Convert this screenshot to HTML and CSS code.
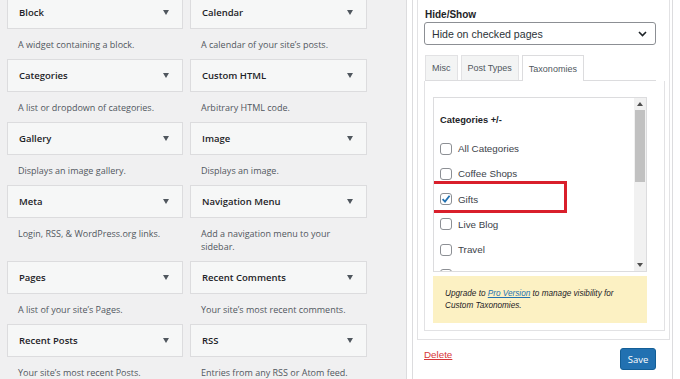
FILE: index.html
```html
<!DOCTYPE html>
<html>
<head>
<meta charset="utf-8">
<link rel="stylesheet" href="styles.css">
</head>
<body>
<div class="page">
  <div class="widgets">
    <div class="witem"><div class="wbox"><span class="wtitle">Block</span><span class="arrow"></span></div><p class="wdesc">A widget containing a block.</p></div>
    <div class="witem"><div class="wbox"><span class="wtitle">Calendar</span><span class="arrow"></span></div><p class="wdesc">A calendar of your site’s posts.</p></div>
    <div class="witem"><div class="wbox"><span class="wtitle">Categories</span><span class="arrow"></span></div><p class="wdesc">A list or dropdown of categories.</p></div>
    <div class="witem"><div class="wbox"><span class="wtitle">Custom HTML</span><span class="arrow"></span></div><p class="wdesc">Arbitrary HTML code.</p></div>
    <div class="witem"><div class="wbox"><span class="wtitle">Gallery</span><span class="arrow"></span></div><p class="wdesc">Displays an image gallery.</p></div>
    <div class="witem"><div class="wbox"><span class="wtitle">Image</span><span class="arrow"></span></div><p class="wdesc">Displays an image.</p></div>
    <div class="witem"><div class="wbox"><span class="wtitle">Meta</span><span class="arrow"></span></div><p class="wdesc">Login, RSS, &amp; WordPress.org links.</p></div>
    <div class="witem"><div class="wbox"><span class="wtitle">Navigation Menu</span><span class="arrow"></span></div><p class="wdesc">Add a navigation menu to your sidebar.</p></div>
    <div class="witem"><div class="wbox"><span class="wtitle">Pages</span><span class="arrow"></span></div><p class="wdesc">A list of your site’s Pages.</p></div>
    <div class="witem"><div class="wbox"><span class="wtitle">Recent Comments</span><span class="arrow"></span></div><p class="wdesc">Your site’s most recent comments.</p></div>
    <div class="witem"><div class="wbox"><span class="wtitle">Recent Posts</span><span class="arrow"></span></div><p class="wdesc">Your site’s most recent Posts.</p></div>
    <div class="witem"><div class="wbox"><span class="wtitle">RSS</span><span class="arrow"></span></div><p class="wdesc">Entries from any RSS or Atom feed.</p></div>
  </div>

  <div class="sidebar">
    <div class="widget">
      <div class="form-box">
        <div class="hs-label">Hide/Show</div>
        <div class="select">
          <span>Hide on checked pages</span>
          <svg class="chev" width="9" height="6" viewBox="0 0 9 6"><path d="M1 1 L4.5 4.5 L8 1" fill="none" stroke="#1d2327" stroke-width="1.6"/></svg>
        </div>
        <div class="tabs">
          <span class="tab">Misc</span>
          <span class="tab">Post Types</span>
          <span class="tab active">Taxonomies</span>
        </div>
        <div class="panel">
          <div class="listbox">
            <div class="list">
              <div class="list-title">Categories +/-</div>
              <div class="item"><span class="cb"></span>All Categories</div>
              <div class="item"><span class="cb"></span>Coffee Shops</div>
              <div class="item hl"><span class="cb"><svg width="10" height="10" viewBox="0 0 10 10"><path d="M1.6 5.2 L4 7.6 L8.6 1.8" fill="none" stroke="#2271b1" stroke-width="1.8"/></svg></span>Gifts<span class="mark"></span></div>
              <div class="item"><span class="cb"></span>Live Blog</div>
              <div class="item"><span class="cb"></span>Travel</div>
              <div class="item"><span class="cb"></span></div>
            </div>
            <div class="scrollbar">
              <div class="sb-btn"><svg width="6" height="4" viewBox="0 0 6 4"><path d="M0 4 L3 0 L6 4Z" fill="#505050"/></svg></div>
              <div class="sb-thumb"></div>
              <div class="sb-track"></div>
              <div class="sb-btn"><svg width="6" height="4" viewBox="0 0 6 4"><path d="M0 0 L3 4 L6 0Z" fill="#505050"/></svg></div>
            </div>
          </div>
          <div class="notice">Upgrade to <a href="#">Pro Version</a> to manage visibility for Custom Taxonomies.</div>
        </div>
      </div>
      <div class="actions">
        <a class="delete" href="#">Delete</a>
        <button class="save">Save</button>
      </div>
    </div>
  </div>
</div>
</body>
</html>
```

FILE: styles.css
```css
html, body {
  margin: 0;
  padding: 0;
}
body {
  background: #f0f0f1;
  width: 680px;
  height: 379px;
  overflow: hidden;
  font-family: "Open Sans", "Noto Sans", sans-serif;
}
.page {
  display: flex;
  height: 379px;
}
.widgets {
  width: 406px;
  flex: none;
  box-sizing: border-box;
  padding-left: 7px;
  margin-top: -4px;
  display: grid;
  grid-template-columns: 176px 177px;
  column-gap: 7px;
  align-content: start;
}
.wbox {
  height: 33px;
  box-sizing: border-box;
  border: 1px solid #dcdcde;
  background: #f6f7f7;
  display: flex;
  align-items: center;
  justify-content: space-between;
  padding: 0 13px 0 11px;
}
.wtitle {
  font-size: 9.5px;
  font-weight: 600;
  color: #1d2327;
}
.arrow {
  width: 0;
  height: 0;
  border-left: 3.5px solid transparent;
  border-right: 3.5px solid transparent;
  border-top: 5px solid #50575e;
}
.wdesc {
  margin: 9px 0 8px 11px;
  max-width: 150px;
  font-size: 9px;
  line-height: 13px;
  color: #50575e;
}

/* sidebar */
.sidebar {
  flex: none;
  width: 274px;
  box-sizing: border-box;
  background: #fff;
  border-left: 1px solid #dcdcde;
  padding-left: 5px;
}
.widget {
  width: 261px;
  height: 100%;
  box-sizing: border-box;
  border-left: 1px solid #dcdcde;
  border-right: 1px solid #dcdcde;
  padding: 0 2px 0 4px;
  font-family: "Liberation Sans", Arial, sans-serif;
}
.form-box {
  border: 1px solid #e2e2e4;
  border-top: none;
  padding: 9px 3px 8px 6px;
}
.hs-label {
  font-size: 10px;
  font-weight: bold;
  line-height: 12px;
  color: #1d2327;
  padding-left: 1px;
}
.select {
  margin-top: 1px;
  width: 232px;
  height: 23px;
  box-sizing: border-box;
  border: 1px solid #8c8f94;
  border-radius: 3px;
  display: flex;
  align-items: center;
  justify-content: space-between;
  padding: 0 8px 0 7px;
  font-size: 10.6px;
  color: #2c3338;
}
.chev {
  display: block;
}
.tabs {
  margin-top: 10px;
  width: 231px;
  margin-left: 1px;
  display: flex;
  gap: 3px;
  border-bottom: 1px solid #dcdcde;
  height: 25px;
}
.tab {
  height: 25px;
  box-sizing: border-box;
  border: 1px solid #e2e2e4;
  border-bottom: none;
  background: #f3f4f4;
  padding: 0 6px;
  display: flex;
  align-items: center;
  font-size: 9px;
  color: #50575e;
}
.tab.active {
  background: #fff;
  height: 26px;
  padding: 0 6px;
  border-color: #dcdcde;
}
.panel {
  width: 241px;
  box-sizing: border-box;
  border: 1px solid #e2e2e4;
  border-top: none;
  padding: 16px 17px 7px 8px;
}
.listbox {
  height: 175px;
  box-sizing: border-box;
  border: 1px solid #dcdcde;
  display: flex;
  overflow: hidden;
}
.list {
  flex: 1;
  padding-left: 6px;
  overflow: hidden;
}
.list-title {
  margin-top: 16px;
  font-size: 9.3px;
  font-weight: bold;
  line-height: 12px;
  color: #1d2327;
  margin-bottom: 10px;
}
.item {
  position: relative;
  height: 25.25px;
  display: flex;
  align-items: center;
  font-size: 9.8px;
  color: #3c434a;
}
.cb {
  width: 12px;
  height: 12px;
  box-sizing: border-box;
  border: 1px solid #8c8f94;
  border-radius: 3px;
  background: #fff;
  margin-right: 6px;
  display: flex;
  align-items: center;
  justify-content: center;
}
.mark {
  position: absolute;
  left: -11px;
  top: -6px;
  width: 138px;
  height: 32px;
  box-sizing: border-box;
  border: 3px solid #d91f2b;
}
.scrollbar {
  width: 12px;
  flex: none;
  background: #f1f1f1;
  display: flex;
  flex-direction: column;
}
.sb-btn {
  height: 12px;
  display: flex;
  align-items: center;
  justify-content: center;
}
.sb-thumb {
  height: 72px;
  margin: 0 1px;
  background: #c1c1c1;
}
.sb-track {
  flex: 1;
}
.notice {
  margin-top: 4px;
  height: 47px;
  box-sizing: border-box;
  background: #fcf1c3;
  padding: 12px 12px 0 12px;
  font-size: 8.2px;
  line-height: 12px;
  font-style: italic;
  color: #1d2327;
}
.notice a {
  color: #2271b1;
}
.actions {
  display: flex;
  justify-content: space-between;
  align-items: flex-start;
  padding: 8px 14px 0 7px;
}
.delete {
  font-size: 9.8px;
  line-height: 14px;
  color: #d63638;
}
.save {
  height: 22px;
  width: 36px;
  box-sizing: border-box;
  padding: 0;
  border: 1px solid #135e96;
  border-radius: 3px;
  background: #2271b1;
  color: #fff;
  font-family: "Open Sans", sans-serif;
  font-size: 9.5px;
}
```
